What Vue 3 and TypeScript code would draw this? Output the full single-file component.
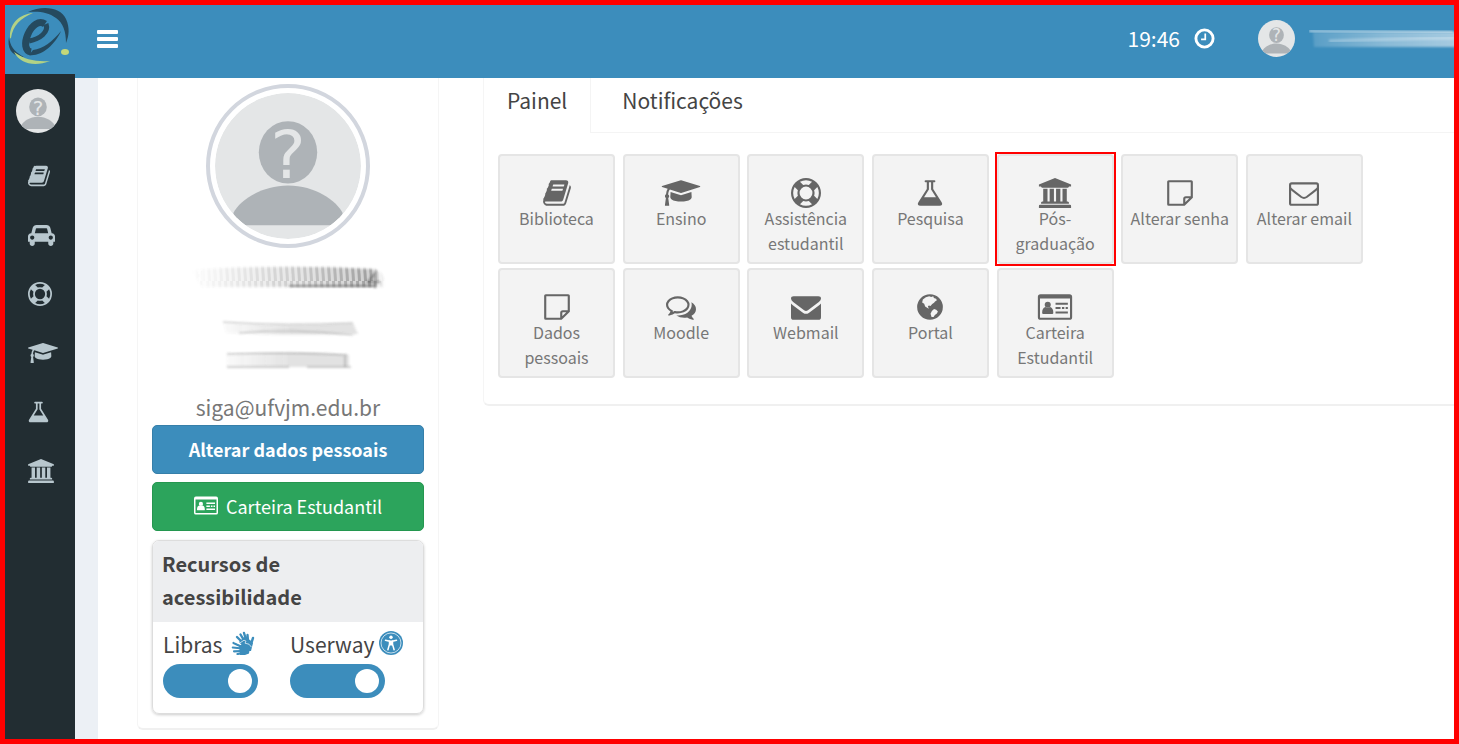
<script setup lang="ts">
import { ref } from 'vue'

interface MenuItem {
  icon: string
  label: string
  width: number
}

interface Tile {
  icon: string
  label: string
  marked?: boolean
}

const menu: MenuItem[] = [
  { icon: 'book', label: 'Biblioteca', width: 22 },
  { icon: 'car', label: 'Transporte', width: 27 },
  { icon: 'ring', label: 'Assistência estudantil', width: 24 },
  { icon: 'cap', label: 'Ensino', width: 30 },
  { icon: 'flask', label: 'Pesquisa', width: 21 },
  { icon: 'bank', label: 'Pós-graduação', width: 26 },
]

const tiles: Tile[] = [
  { icon: 'book', label: 'Biblioteca' },
  { icon: 'cap', label: 'Ensino' },
  { icon: 'ring', label: 'Assistência estudantil' },
  { icon: 'flask', label: 'Pesquisa' },
  { icon: 'bank', label: 'Pós-graduação', marked: true },
  { icon: 'note', label: 'Alterar senha' },
  { icon: 'mail-o', label: 'Alterar email' },
  { icon: 'note', label: 'Dados pessoais' },
  { icon: 'chat', label: 'Moodle' },
  { icon: 'mail', label: 'Webmail' },
  { icon: 'globe', label: 'Portal' },
  { icon: 'card', label: 'Carteira Estudantil' },
]

const tabs = ['Painel', 'Notificações']
const activeTab = ref('Painel')
const libras = ref(true)
const userway = ref(true)
</script>

<template>
  <div class="app">
    <svg class="sprite" width="0" height="0" aria-hidden="true">
      <symbol id="book" viewBox="64 0 1664 1792"><path d="M1703 478q40 57 18 129l-275 906q-19 64-76.5 107.5t-122.5 43.5h-923q-77 0-148.5-53.5t-99.5-131.5q-24-67-2-127 0-4 3-27t4-37q1-8-3-21.5t-3-19.5q2-11 8-21t16.5-23.5 16.5-23.5q23-38 45-91.5t30-91.5q3-10 .5-30t-.5-28q3-11 17-28t17-23q21-36 42-92t25-90q1-9-2.5-32t.5-28q4-13 22-30.5t22-22.5q19-26 42.5-84.5t27.5-96.5q1-8-3-25.5t-2-26.5q2-8 9-18t18-23 17-21q8-12 16.5-30.5t15-35 16-36 19.5-32 26.5-23.5 36-11.5 47.5 5.5l-1 3q38-9 51-9h761q74 0 114 56t18 130l-274 906q-36 119-71.5 153.5t-128.5 34.5h-869q-27 0-38 15-11 16-1 43 24 70 144 70h923q29 0 56-15.5t35-41.5l300-987q7-22 5-57 38 15 59 43zm-1064 2q-4 13 2 22.5t20 9.5h608q13 0 25.5-9.5t16.5-22.5l21-64q4-13-2-22.5t-20-9.5h-608q-13 0-25.5 9.5t-16.5 22.5zm-83 256q-4 13 2 22.5t20 9.5h608q13 0 25.5-9.5t16.5-22.5l21-64q4-13-2-22.5t-20-9.5h-608q-13 0-25.5 9.5t-16.5 22.5z" /></symbol>
      <symbol id="car" viewBox="0 0 2048 1792"><path d="M480 1088q0-66-47-113t-113-47-113 47-47 113 47 113 113 47 113-47 47-113zm36-320h1016l-89-357q-2-8-14-17.5t-21-9.5h-768q-9 0-21 9.5t-14 17.5zm1372 320q0-66-47-113t-113-47-113 47-47 113 47 113 113 47 113-47 47-113zm160-96v384q0 14-9 23t-23 9h-96v128q0 80-56 136t-136 56-136-56-56-136v-128h-1024v128q0 80-56 136t-136 56-136-56-56-136v-128h-96q-14 0-23-9t-9-23v-384q0-93 65.5-158.5t158.5-65.5h28l105-419q23-94 104-157.5t179-63.5h768q98 0 179 63.5t104 157.5l105 419h28q93 0 158.5 65.5t65.5 158.5z" /></symbol>
      <symbol id="ring" viewBox="0 0 1792 1792"><path d="M896 0q182 0 348 71t286 191 191 286 71 348-71 348-191 286-286 191-348 71-348-71-286-191-191-286-71-348 71-348 191-286 286-191 348-71zm0 128q-190 0-361 90l194 194q82-28 167-28t167 28l194-194q-171-90-361-90zm-678 1129l194-194q-28-82-28-167t28-167l-194-194q-90 171-90 361t90 361zm678 407q190 0 361-90l-194-194q-82 28-167 28t-167-28l-194 194q171 90 361 90zm0-384q159 0 271.5-112.5t112.5-271.5-112.5-271.5-271.5-112.5-271.5 112.5-112.5 271.5 112.5 271.5 271.5 112.5zm484-217l194 194q90-171 90-361t-90-361l-194 194q28 82 28 167t-28 167z" /></symbol>
      <symbol id="cap" viewBox="0 0 2304 1792"><path d="M1774 836l18 316q4 69-82 128t-235 93.5-323 34.5-323-34.5-235-93.5-82-128l18-316 574 181q22 7 48 7t48-7zm530-324q0 23-22 31l-1120 352q-4 1-10 1t-10-1l-652-206q-43 34-71 111.5t-34 178.5q63 36 63 109 0 69-58 107l58 433q2 14-8 25-9 11-24 11h-192q-15 0-24-11-10-11-8-25l58-433q-58-38-58-107 0-73 65-111 11-207 98-330l-333-104q-22-8-22-31t22-31l1120-352q4-1 10-1t10 1l1120 352q22 8 22 31z" /></symbol>
      <symbol id="flask" viewBox="128 0 1536 1792"><path d="M1591 1448q56 89 21.5 152.5t-140.5 63.5h-1152q-106 0-140.5-63.5t21.5-152.5l503-793v-399h-64q-26 0-45-19t-19-45 19-45 45-19h512q26 0 45 19t19 45-19 45-45 19h-64v399zm-779-725l-272 429h712l-272-429-20-31v-436h-128v436z" /></symbol>
      <symbol id="bank" viewBox="0 0 1920 1792"><path d="M960 0l960 384v128h-128q0 26-20.5 45t-48.5 19h-1526q-28 0-48.5-19t-20.5-45h-128v-128zm-704 640h256v768h128v-768h256v768h128v-768h256v768h128v-768h256v768h59q28 0 48.5 19t20.5 45v64h-1664v-64q0-26 20.5-45t48.5-19h59v-768zm1595 960q28 0 48.5 19t20.5 45v128h-1920v-128q0-26 20.5-45t48.5-19h1782z" /></symbol>
      <symbol id="note" viewBox="0 0 1536 1792"><path d="M1472 1150V224q0-32-32-32H96q-32 0-32 32v1344q0 32 32 32h926zM1022 1600v-354q0-96 96-96h354" fill="none" stroke="currentColor" stroke-width="128" /></symbol>
      <symbol id="mail-o" viewBox="0 0 1792 1792"><rect x="64" y="320" width="1664" height="1280" rx="96" fill="none" stroke="currentColor" stroke-width="128" /><path d="M64 600q130 130 310 260l360 275q162 110 324 0l360-275q180-130 310-260" fill="none" stroke="currentColor" stroke-width="120" /></symbol>
      <symbol id="mail" viewBox="0 0 1792 1792"><path d="M160 256h1472q160 0 160 130 0 110-130 215L1010 1090q-114 80-228 0L130 601Q0 496 0 386 0 256 160 256zM0 690q50 60 130 118l600 440q166 110 332 0l600-440q80-58 130-118v814q0 160-160 160H160Q0 1664 0 1504z" /></symbol>
      <symbol id="chat" viewBox="0 0 1792 1792"><path d="M704 384q-153 0-286 52t-211.5 141-78.5 191q0 82 53 158t149 132l97 56-35 84q34-20 62-39l44-31 53 10q78 14 153 14 153 0 286-52t211.5-141 78.5-191-78.5-191-211.5-141-286-52zm0-128q191 0 353.5 68.5t256.5 186.5 94 257-94 257-256.5 186.5-353.5 68.5q-86 0-176-16-124 88-278 128-36 9-86 16h-3q-11 0-20.5-8t-11.5-21q-1-3-1-6.5t.5-6.5 2-6l2.5-5 3.5-5.5 4-5 4.5-5 4-4.5q5-6 23-25t26-29.5 22.5-29 25-38.5 20.5-44q-124-72-195-177t-71-224q0-139 94-257t256.5-186.5 353.5-68.5zm822 1169q10 24 20.5 44t25 38.5 22.5 29 26 29.5 23 25q1 1 4 4.5t4.5 5 4 5 3.5 5.5l2.5 5 2 6 .5 6.5-1 6.5q-3 14-13 22t-22 7q-50-7-86-16-154-40-278-128-90 16-176 16-271 0-472-132 58 4 88 4 161 0 309-45t264-129q125-92 192-212t67-254q0-77-23-152 129 71 204 178t75 230q0 120-71 224.5t-195 176.5z" /></symbol>
      <symbol id="globe" viewBox="0 0 1536 1792"><path fill-rule="evenodd" d="M768 128a768 768 0 1 1 0 1536a768 768 0 1 1 0-1536zM720 250L520 310 340 450 300 620 420 700 480 860 620 950 700 1000 640 860 700 800 800 830 900 720 1010 640 1070 560 1180 500 1130 400 1000 360 960 260 840 300zM1010 1020L880 1130 800 1300 860 1500 980 1490 1060 1380 1180 1290 1240 1160 1140 1060z" /></symbol>
      <symbol id="card" viewBox="0 0 2048 1792"><path fill-rule="evenodd" d="M160 128h1728q160 0 160 160v1216q0 160-160 160H160Q0 1664 0 1504V288Q0 128 160 128zM128 384v1120q0 32 32 32h1728q32 0 32-32V384z" /><circle cx="590" cy="760" r="180" /><path d="M256 1250q0-300 190-350q144 90 288 0q190 50 190 350 0 60-70 60H326q-70 0-70-60zM1056 640h736v120h-736zM1056 900h300v120h-300zM1440 900h140v120h-140zM1660 900h132v120h-132zM1056 1160h736v120h-736z" /></symbol>
      <symbol id="clock" viewBox="0 0 22 22"><circle cx="11" cy="11" r="9" fill="none" stroke="currentColor" stroke-width="3" /><path d="M11.8 5.8v6.2H7.4" fill="none" stroke="currentColor" stroke-width="1.8" /></symbol>
      <symbol id="person" viewBox="0 0 150 150">
        <rect width="150" height="150" fill="#e4e6e7" />
        <ellipse cx="75" cy="61" rx="30" ry="32" fill="#aeb3b7" />
        <path d="M19 136v-13c6-12 28-28 56-28s50 16 56 28v13z" fill="#aeb3b7" />
      </symbol>
      <symbol id="hands" viewBox="0 0 24 24">
        <path d="M12 12L6 6M14 11L9.500 3.500M15.500 10L13 2M17 10L16.500 4M19 16L22 7" fill="none" stroke="currentColor" stroke-width="2.400" stroke-linecap="round" />
        <path d="M8 11l5-5 6 3 3 3-2 8h-4z" />
        <path d="M11 16L2.500 12M11 17.500L1.800 16.500M11 20L3 20.300M12 22L6.500 23M11 15L14 11.500" fill="none" stroke="currentColor" stroke-width="2.200" stroke-linecap="round" />
        <path d="M8 14.500l7-2 4 4-1 6-4 1.500H9z" />
        <path d="M3 10.600l5 2 5-3.400 2 1-1 2 4 1 2.500 3" fill="none" stroke="#fff" stroke-width=".7" />
      </symbol>
      <symbol id="access" viewBox="0 0 24 24"><circle cx="12" cy="12" r="12" /><circle cx="12" cy="12" r="10" fill="none" stroke="#fff" stroke-width=".7" /><circle cx="12" cy="6.300" r="1.700" fill="#fff" /><path d="M6.500 9.300l4 .9v3l-1.600 5.600M17.500 9.300l-4 .9v3l1.600 5.600" fill="none" stroke="#fff" stroke-width="1.500" stroke-linecap="round" /><path d="M10 9.500h4v5h-4z" fill="#fff" /></symbol>
    </svg>

    <aside class="side">
      <a class="brand" href="#" aria-label="e-Campus">
        <svg viewBox="0 0 70 69" width="70" height="69" aria-hidden="true">
          <path d="M23 7C37 0 56 2 61 14c4 9 3 17 0 24 0-12-3-20-10-25C43 7 34 6 23 7z" fill="#254a5f" />
          <path d="M28 8C15 9 5 18 5 31c0 2 0 3 1 2C8 20 16 13 28 8z" fill="#b2d285" />
          <path d="M4 32c-2 10 2 19 13 20 2 0 2 0 0-1C9 46 5 41 4 32z" fill="#254a5f" />
          <path d="M9 47c6 12 21 15 36 9-13 1-25-1-36-9z" fill="#b2d285" />
          <path d="M40 19C34 15 27 20 23 29C19 38 20 46 26 47" fill="none" stroke="#254a5f" stroke-width="7" />
          <path d="M24 36C35 34 44 27 41 19" fill="none" stroke="#254a5f" stroke-width="5" />
          <path d="M24 50C36 52 50 40 56 26 48 36 38 44 28 45z" fill="#254a5f" />
          <ellipse cx="60" cy="47" rx="4" ry="3" fill="#c5d879" />
        </svg>
      </a>
      <nav class="menu" aria-label="Menu principal">
        <a href="#" class="me" aria-label="Perfil"><svg class="face" viewBox="0 0 150 150"><use href="#person" /><text class="mark" x="75" y="87">?</text></svg></a>
        <a v-for="m in menu" :key="m.icon" href="#" class="link" :aria-label="m.label">
          <svg :width="m.width" height="24"><use :href="'#' + m.icon" /></svg>
        </a>
      </nav>
    </aside>

    <div class="main">
      <header class="top">
        <button class="burger" type="button" aria-label="Alternar menu"><i /><i /><i /></button>
        <div class="time"><span>19:46</span><svg class="clock"><use href="#clock" /></svg></div>
        <a class="user" href="#" aria-label="Usuário">
          <svg class="face" viewBox="0 0 150 150"><use href="#person" /><text class="mark" x="75" y="87">?</text></svg>
          <svg class="smear" viewBox="0 0 145 26" preserveAspectRatio="none">
            <defs>
              <linearGradient id="fade"><stop offset="0" stop-color="#fff" stop-opacity=".15" /><stop offset=".5" stop-color="#fff" stop-opacity=".4" /><stop offset="1" stop-color="#fff" stop-opacity=".55" /></linearGradient>
              <filter id="soft"><feGaussianBlur stdDeviation="1" /></filter>
            </defs>
            <path d="M4 6h145v15H5z" fill="url(#fade)" filter="url(#soft)" />
            <path d="M0 5l144 1" stroke="#fff" stroke-opacity=".6" stroke-width="2" filter="url(#soft)" />
            <path d="M20 15q60-2 125-3" fill="none" stroke="#fff" stroke-opacity=".3" stroke-width="3" filter="url(#soft)" />
          </svg>
        </a>
      </header>

      <main class="content">
        <section class="profile">
          <svg class="portrait" viewBox="0 0 150 150"><use href="#person" /><text class="mark" x="75" y="87">?</text></svg>
          <svg class="scrub" viewBox="-6 -3 230 144" aria-hidden="true">
            <defs>
              <linearGradient id="ramp"><stop offset="0" stop-color="#555" stop-opacity="0" /><stop offset=".5" stop-color="#555" stop-opacity=".28" /><stop offset=".92" stop-color="#444" stop-opacity=".5" /><stop offset="1" stop-color="#555" stop-opacity="0" /></linearGradient>
              <linearGradient id="pale"><stop offset="0" stop-color="#555" stop-opacity=".03" /><stop offset=".5" stop-color="#555" stop-opacity=".16" /><stop offset="1" stop-color="#555" stop-opacity=".16" /></linearGradient>
              <pattern id="bars" width="6" height="30" patternUnits="userSpaceOnUse"><path d="M0 0h3l2 30h-3z" fill="#fff" fill-opacity=".5" /></pattern>
              <filter id="blur" x="-10%" y="-50%" width="120%" height="200%"><feGaussianBlur stdDeviation="1.300" /></filter>
            </defs>
            <path d="M12 19q90-6 184-1 12 6 10 18H22z" fill="url(#ramp)" filter="url(#blur)" />
            <path d="M10 12h200v28H10z" fill="url(#bars)" />
            <path d="M110 35h86M196 37V22l-7 9h12" fill="none" stroke="#444" stroke-opacity=".5" stroke-width="2" filter="url(#blur)" />
            <path d="M44 71q60 5 130 1l5 11q-70 2-132-1z" fill="url(#pale)" filter="url(#blur)" />
            <path d="M44 71q60 4 130 1M60 82q50-5 114 2" fill="none" stroke="#666" stroke-opacity=".4" filter="url(#blur)" />
            <path d="M48 104q70-5 122 0v12H48z" fill="url(#pale)" filter="url(#blur)" />
            <path d="M48 103q70-2 120 1M48 116h62M128 116h44M166 105v11" fill="none" stroke="#555" stroke-opacity=".5" filter="url(#blur)" />
          </svg>
          <p class="email">siga@ufvjm.edu.br</p>
          <button class="btn blue" type="button">Alterar dados pessoais</button>
          <button class="btn green" type="button"><svg class="idcard"><use href="#card" /></svg>Carteira Estudantil</button>
          <div class="a11y">
            <h2>Recursos de acessibilidade</h2>
            <div class="switches">
              <label><span>Libras<svg class="mini gap"><use href="#hands" /></svg></span><input v-model="libras" type="checkbox" role="switch" /></label>
              <label><span>Userway<svg class="mini"><use href="#access" /></svg></span><input v-model="userway" type="checkbox" role="switch" /></label>
            </div>
          </div>
        </section>

        <section class="panel">
          <div class="tabs" role="tablist">
            <button v-for="t in tabs" :key="t" type="button" role="tab" :aria-selected="t === activeTab" :class="{ on: t === activeTab }" @click="activeTab = t">{{ t }}</button>
          </div>
          <div class="grid">
            <a v-for="t in tiles" :key="t.label" href="#" class="tile" :class="{ marked: t.marked }">
              <svg class="pic"><use :href="'#' + t.icon" /></svg>
              <span>{{ t.label }}</span>
            </a>
          </div>
        </section>
      </main>
    </div>
  </div>
</template>

<style>
body {
  margin: 0;
}
</style>

<style scoped>
.app {
  box-sizing: border-box;
  display: grid;
  grid-template-columns: 70px minmax(0, 1fr);
  min-height: 100vh;
  border: 5px solid #f00;
  background: #fff;
  color: #444;
  font-family: "Noto Sans CJK SC", "Open Sans", sans-serif;
  font-size: 21px;
}
.sprite {
  position: absolute;
}
svg {
  display: block;
  flex: none;
  fill: currentColor;
}
a {
  color: inherit;
  text-decoration: none;
}
button {
  font: inherit;
  cursor: pointer;
}
.side {
  display: flex;
  flex-direction: column;
  background: #222d32;
}
.brand {
  height: 69px;
  background: #3c8dbc;
}
.menu {
  color: #b8c7ce;
}
.me {
  display: block;
  padding: 15px 11px 13px;
}
.me .face {
  width: 44px;
  height: 44px;
}
.face {
  border-radius: 50%;
}
.mark {
  fill: #e4e6e7;
  font-family: "DejaVu Sans", sans-serif;
  font-size: 68px;
  text-anchor: middle;
}
.link {
  display: flex;
  align-items: center;
  height: 59px;
  padding-left: 23px;
}
.main {
  display: flex;
  flex-direction: column;
}
.top {
  display: flex;
  align-items: center;
  height: 73px;
  padding-left: 22px;
  background: #3c8dbc;
  color: #fff;
}
.burger {
  display: grid;
  gap: 3px;
  width: 21px;
  margin-top: -5px;
  padding: 0;
  border: 0;
  background: none;
}
.burger i {
  height: 4px;
  border-radius: 1px;
  background: #fff;
}
.time {
  display: flex;
  align-items: center;
  gap: 14px;
  margin: -7px 43px 0 auto;
}
.clock {
  width: 21px;
  height: 21px;
}
.user {
  display: flex;
  align-items: center;
  gap: 14px;
  margin-top: -6px;
}
.user .face {
  width: 37px;
  height: 37px;
}
.smear {
  width: 145px;
  height: 26px;
}
.content {
  display: flex;
  flex: 1;
  align-items: flex-start;
  gap: 44px;
  padding: 0 0 8px 39px;
  border-left: 23px solid #ecf0f5;
}
.profile {
  box-sizing: border-box;
  display: flex;
  flex: none;
  flex-direction: column;
  width: 302px;
  padding: 6px 14px 14px;
  border: 1px solid #f5f5f5;
  border-top: 0;
  border-bottom: 2px solid #f0f0f0;
  border-radius: 0 0 6px 6px;
}
.portrait {
  box-sizing: border-box;
  align-self: center;
  width: 164px;
  height: 164px;
  padding: 5px;
  border: 4px solid #d2d6de;
  border-radius: 50%;
}
.portrait use {
  clip-path: circle(75px);
}
.scrub {
  align-self: center;
  width: 230px;
  height: 144px;
}
.email {
  margin: 0 0 2px;
  line-height: 31px;
  text-align: center;
  color: #777;
}
.btn {
  display: flex;
  align-items: center;
  justify-content: center;
  gap: 8px;
  box-sizing: border-box;
  height: 49px;
  margin-bottom: 8px;
  padding: 0 0 2px;
  border: 1px solid;
  border-radius: 5px;
  color: #fff;
  font-size: 18px;
}
.blue {
  border-color: #367fa9;
  background: #3c8dbc;
  font-weight: 700;
}
.green {
  border-color: #24974f;
  background: #2ca45c;
}
.idcard {
  width: 24px;
  height: 21px;
}
.a11y {
  overflow: hidden;
  margin-top: 1px;
  border: 1px solid #ddd;
  border-radius: 7px;
  box-shadow: 0 1px 3px rgba(0, 0, 0, 0.2);
}
.a11y h2 {
  margin: 0;
  padding: 6px 60px 9px 9px;
  background: #edeef0;
  font-size: 20px;
  font-weight: 700;
  line-height: 33px;
}
.switches {
  display: grid;
  grid-template-columns: 127px 1fr;
  padding: 6px 10px 15px;
}
.switches label {
  display: grid;
  gap: 3px;
}
.switches span {
  display: flex;
  align-items: center;
  gap: 5px;
  line-height: 33px;
}
.mini {
  width: 24px;
  height: 24px;
  margin-bottom: 4px;
  color: #3c8dbc;
}
.gap {
  margin-left: 4px;
}
.switches input {
  display: flex;
  align-items: center;
  box-sizing: border-box;
  width: 95px;
  height: 34px;
  margin: 0;
  padding: 0 6px;
  border-radius: 17px;
  background: #bbb;
  appearance: none;
}
.switches input::before {
  width: 24px;
  height: 24px;
  border-radius: 50%;
  background: #fff;
  content: "";
}
.switches input:checked {
  justify-content: flex-end;
  background: #3c8dbc;
}
.panel {
  flex: 1;
  min-width: 0;
  border-bottom: 2px solid #f0f0f0;
  border-left: 1px solid #f5f5f5;
  border-radius: 0 0 0 6px;
}
.tabs {
  display: flex;
  height: 54px;
  border-bottom: 1px solid #f4f4f4;
}
.tabs button {
  margin-bottom: -1px;
  padding: 0 31px 11px;
  border: 0;
  background: none;
  color: #444;
}
.tabs .on {
  padding: 0 23px 11px;
  border-right: 1px solid #f4f4f4;
  background: #fff;
}
.grid {
  display: grid;
  grid-template-columns: repeat(auto-fill, 117px);
  gap: 4px 7px;
  justify-content: space-between;
  max-width: 865px;
  padding: 21px 14px 26px;
}
.tile {
  position: relative;
  display: flex;
  flex-direction: column;
  align-items: center;
  box-sizing: border-box;
  height: 110px;
  padding: 22px 5px 0;
  border: 2px solid #e5e5e5;
  border-radius: 4px;
  background: #f3f3f3;
  color: #777;
  font-size: 16px;
  line-height: 25px;
  text-align: center;
}
.marked::after {
  position: absolute;
  inset: -4px;
  border: 2px solid #f00;
  content: "";
}
.pic {
  width: 40px;
  height: 30px;
  margin-bottom: -2px;
  color: #666;
}
</style>
